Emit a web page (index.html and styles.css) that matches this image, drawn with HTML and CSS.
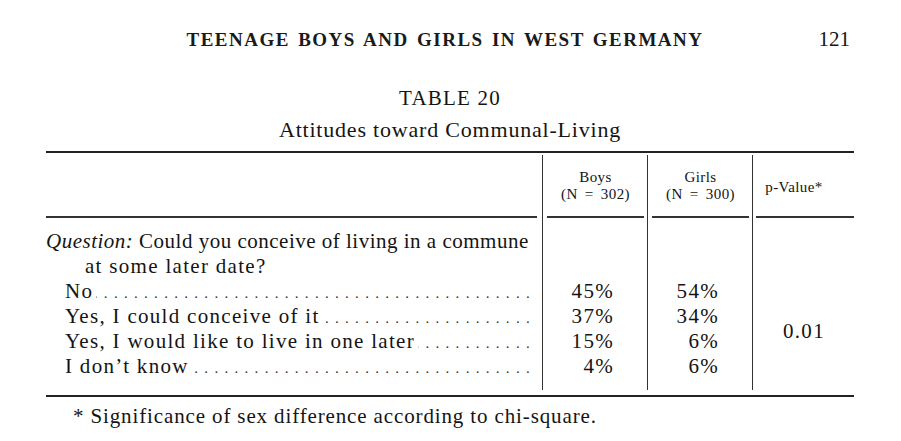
FILE: index.html
```
<!DOCTYPE html>
<html lang="en">
<head>
<meta charset="utf-8">
<title>Table 20</title>
<link rel="stylesheet" href="styles.css">
</head>
<body>
<div class="page">
  <header class="running-head">
    <span class="spacer"></span>
    <h1 class="running-title">TEENAGE BOYS AND GIRLS IN WEST GERMANY</h1>
    <span class="folio">121</span>
  </header>

  <div class="caption">
    <div class="table-no">TABLE 20</div>
    <div class="table-title">Attitudes toward Communal-Living</div>
  </div>

  <div class="table">
    <div class="grid">
      <div class="th th-label"><div class="th-in"></div></div>
      <div class="th th-mid"><div class="th-in">Boys<br>(N = 302)</div></div>
      <div class="th th-mid"><div class="th-in">Girls<br>(N = 300)</div></div>
      <div class="th th-last"><div class="th-in">p-Value*</div></div>

      <div class="question"><span class="q-first"><em>Question:</em> Could you conceive of living in a commune</span><br>at some later date?</div>

      <div class="leader"><span>No</span><span class="dots"></span></div>
      <div class="num">45%</div>
      <div class="num">54%</div>
      <div class="pval">0.01</div>

      <div class="leader"><span>Yes, I could conceive of it</span><span class="dots"></span></div>
      <div class="num">37%</div>
      <div class="num">34%</div>

      <div class="leader"><span>Yes, I would like to live in one later</span><span class="dots"></span></div>
      <div class="num">15%</div>
      <div class="num">6%</div>

      <div class="leader"><span>I don’t know</span><span class="dots"></span></div>
      <div class="num">4%</div>
      <div class="num">6%</div>
    </div>
  </div>

  <p class="footnote">* Significance of sex difference according to chi-square.</p>
</div>
</body>
</html>
```

FILE: styles.css
```
html, body {
  margin: 0;
  padding: 0;
  background: #ffffff;
}

body {
  font-family: "Liberation Serif", "Times New Roman", serif;
  color: #141414;
}

.page {
  width: 808px;
  padding-left: 46px;
  padding-top: 27px;
}

/* running head */
.running-head {
  display: grid;
  grid-template-columns: 1fr auto 1fr;
  align-items: baseline;
  height: 24px;
}

.running-title {
  margin: 0;
  padding-right: 10px;
  font-size: 19px;
  line-height: 24px;
  font-weight: bold;
  letter-spacing: 1.5px;
  word-spacing: 2px;
  color: #1a1a1a;
}

.folio {
  justify-self: end;
  padding-right: 4px;
  font-size: 21px;
  line-height: 24px;
}

/* caption */
.caption {
  margin-top: 35px;
  text-align: center;
}

.table-no {
  font-size: 21px;
  line-height: 24px;
  letter-spacing: 1.2px;
}

.table-title {
  margin-top: 8px;
  font-size: 22px;
  line-height: 24px;
  letter-spacing: 0.8px;
}

/* table */
.table {
  margin-top: 9px;
  border-top: 2px solid #222;
  border-bottom: 2px solid #222;
  padding-top: 2px;
  padding-bottom: 5px;
}

.grid {
  display: grid;
  grid-template-columns: 496px 105px 105px 102px;
  padding-bottom: 11px;
  background-image:
    linear-gradient(#333, #333),
    linear-gradient(#333, #333),
    linear-gradient(#333, #333);
  background-repeat: no-repeat;
  background-size: 1px 100%;
  background-position: 496px 0, 601px 0, 706px 0;
  font-size: 21px;
  line-height: 25px;
  letter-spacing: 1.3px;
}

.th {
  height: 63px;
}

.th-label { padding-right: 5px; }
.th-mid { padding-left: 5px; padding-right: 3px; }
.th-last { padding-left: 4px; }

.th-in {
  box-sizing: border-box;
  height: 63px;
  border-bottom: 2px solid #333;
  display: flex;
  align-items: center;
  justify-content: center;
  text-align: center;
  font-size: 15px;
  line-height: 16.6px;
  letter-spacing: 0.4px;
  word-spacing: 3px;
  padding-top: 1px;
}

.th-last .th-in {
  padding-right: 22px;
  padding-top: 4px;
}

.question {
  grid-column: 1 / -1;
  padding-top: 11px;
  padding-left: 39px;
  text-indent: -39px;
}

.q-first {
  letter-spacing: 0.5px;
}

.leader {
  grid-column: 1;
  display: flex;
  align-items: baseline;
  height: 25px;
  padding-left: 19px;
  padding-right: 6px;
  white-space: nowrap;
}

.dots {
  flex: 1;
  display: flex;
  justify-content: flex-end;
  overflow: hidden;
  margin-left: 3px;
  font-size: 15px;
  line-height: 15px;
}

.dots::before {
  content: "........................................................................";
  letter-spacing: 6.3px;
  color: #333;
}

.num {
  text-align: right;
  padding-right: 33px;
}

.pval {
  grid-column: 4;
  grid-row: 3 / span 4;
  align-self: center;
  text-align: center;
  padding-top: 5px;
  padding-left: 2px;
}

.footnote {
  margin: 7px 0 0;
  padding-left: 27px;
  font-size: 21px;
  line-height: 25px;
  letter-spacing: 0.87px;
}
```
